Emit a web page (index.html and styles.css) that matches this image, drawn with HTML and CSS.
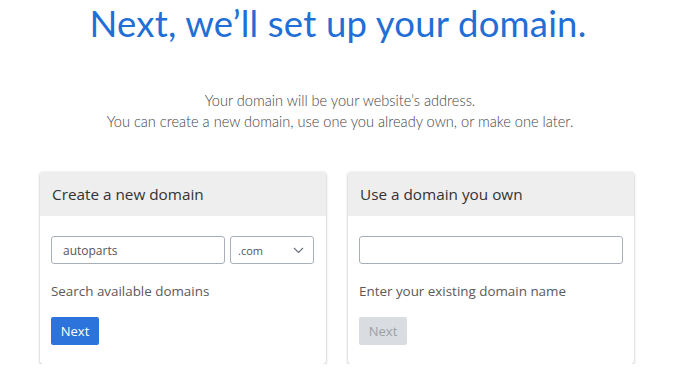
FILE: index.html
```html
<!DOCTYPE html>
<html lang="en">
<head>
<meta charset="utf-8">
<title>Set up your domain</title>
<link rel="stylesheet" href="styles.css">
</head>
<body>
<main class="page">
  <h1 class="title">Next, we’ll set up your domain.</h1>
  <div class="intro">
    <p>Your domain will be your website’s address.</p>
    <p>You can create a new domain, use one you already own, or make one later.</p>
  </div>
  <div class="cards">
    <section class="card">
      <header class="card-head">Create a new domain</header>
      <div class="card-body">
        <div class="row">
          <div class="field field-name">autoparts</div>
          <div class="field field-tld">
            <span>.com</span>
            <svg class="chev" width="11" height="7" viewBox="0 0 11 7"><path d="M1 1 L5.5 5.5 L10 1" fill="none" stroke="#6b7280" stroke-width="1.2"/></svg>
          </div>
        </div>
        <p class="hint">Search available domains</p>
        <button class="btn btn-primary">Next</button>
      </div>
    </section>
    <section class="card">
      <header class="card-head">Use a domain you own</header>
      <div class="card-body">
        <div class="row">
          <div class="field field-full"></div>
        </div>
        <p class="hint">Enter your existing domain name</p>
        <button class="btn btn-disabled">Next</button>
      </div>
    </section>
  </div>
</main>
</body>
</html>
```

FILE: styles.css
```css
* { box-sizing: border-box; }
html, body { margin: 0; padding: 0; background: #ffffff; }
body { font-family: "Open Sans", "Liberation Sans", sans-serif; color: #444; }

.page { width: 680px; }

.title {
  margin: 0;
  padding: 1px 4px 0 0;
  text-align: center;
  font-family: Lato, "Open Sans", sans-serif;
  font-weight: 400;
  font-size: 36.5px;
  line-height: 44px;
  color: #1f6fd6;
  letter-spacing: 0.2px;
}

.intro {
  margin-top: 45px;
  text-align: center;
  font-family: Lato, "Open Sans", sans-serif;
  font-weight: 300;
  font-size: 14.6px;
  line-height: 21px;
  color: #444;
}
.intro p { margin: 0; }

.cards {
  display: flex;
  gap: 22px;
  margin: 40px 0 0 40px;
}

.card {
  width: 286px;
  height: 192px;
  border-radius: 3px;
  background: #fff;
  box-shadow: 0 1px 3px rgba(0,0,0,0.28), 0 0 1px rgba(0,0,0,0.15);
  overflow: hidden;
}

.card-head {
  height: 44px;
  background: #eeeeee;
  padding: 0 12px;
  display: flex;
  align-items: center;
  font-size: 15.3px;
  color: #333;
}

.card-body { padding: 20px 11px 0 11px; }

.row { display: flex; gap: 5px; }

.field {
  height: 28px;
  border: 1px solid #a8afbb;
  border-radius: 3px;
  display: flex;
  align-items: center;
  font-size: 12px;
  color: #555;
}
.field-name { width: 174px; padding-left: 11px; }
.field-tld { width: 84px; padding: 0 9px 0 7px; justify-content: space-between; font-size: 11px; }
.field-full { width: 264px; }

.hint {
  margin: 14px 0 0 0;
  font-size: 13.4px;
  line-height: 26px;
  color: #5a5a5a;
}

.btn {
  margin-top: 13px;
  height: 28px;
  width: 48px;
  border: none;
  border-radius: 2px;
  padding: 0;
  font-family: "Open Sans", sans-serif;
  font-size: 13px;
}
.btn-primary { background: #2c74db; color: #fff; }
.btn-disabled { background: #d9dce1; color: #9aa0a8; }
```
